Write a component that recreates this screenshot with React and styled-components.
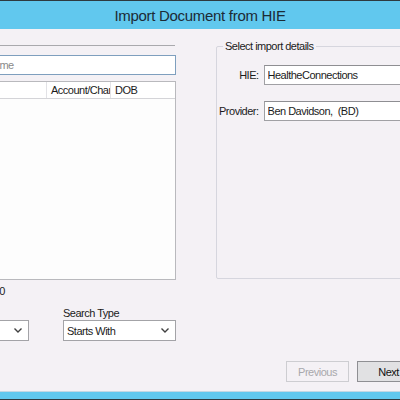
import styled, { createGlobalStyle } from 'styled-components'

const GlobalStyle = createGlobalStyle`
  html, body {
    margin: 0;
    padding: 0;
    background: #f4f1f5;
  }
  #root {
    height: 100vh;
  }
`

const font = `"Liberation Sans", Arial, sans-serif`

const Chevron = () => (
  <svg width="8" height="5" viewBox="0 0 8 5">
    <path d="M0.5 0.5 L4 4 L7.5 0.5" fill="none" stroke="#404040" strokeWidth="1.4" />
  </svg>
)

const App = () => {
  return (
    <Window>
      <GlobalStyle />
      <TitleBar>Import Document from HIE</TitleBar>
      <Body>
        <Columns>
          <LeftPane>
            <Divider />
            <SearchInput placeholder="Last Name" readOnly />
            <ListView>
              <ListHeader>
                <HeaderCell $width={85}>Patient</HeaderCell>
                <HeaderCell $width={64}>Account/Chart</HeaderCell>
                <HeaderCell $width={66}>DOB</HeaderCell>
              </ListHeader>
            </ListView>
            <CountText>Results: 0</CountText>
            <FilterRow>
              <Field $width={68}>
                <FieldLabel>Field</FieldLabel>
                <ComboBox>
                  <span>Name</span>
                  <Chevron />
                </ComboBox>
              </Field>
              <Field $width={113}>
                <FieldLabel>Search Type</FieldLabel>
                <ComboBox>
                  <span>Starts With</span>
                  <Chevron />
                </ComboBox>
              </Field>
            </FilterRow>
          </LeftPane>
          <RightPane>
            <GroupBox>
              <Legend>Select import details</Legend>
              <FormRow>
                <RowLabel>HIE:</RowLabel>
                <TextBox value="HealtheConnections" readOnly />
              </FormRow>
              <FormRow>
                <RowLabel>Provider:</RowLabel>
                <TextBox value="Ben Davidson,  (BD)" readOnly />
              </FormRow>
            </GroupBox>
          </RightPane>
        </Columns>
        <ButtonBar>
          <Button disabled>Previous</Button>
          <Button $primary>Next</Button>
        </ButtonBar>
      </Body>
      <BottomBar />
    </Window>
  )
}

const Window = styled.div`
  width: 400px;
  height: 400px;
  overflow: hidden;
  display: flex;
  flex-direction: column;
  font-family: ${font};
  font-size: 11px;
  letter-spacing: -0.5px;
  color: #1b1b1b;
`

const TitleBar = styled.div`
  height: 28px;
  border-top: 1px solid #2e3a40;
  background: #61c8ee;
  display: flex;
  align-items: center;
  justify-content: center;
  font-size: 15px;
  letter-spacing: -0.3px;
  color: #1c2b36;
  flex-shrink: 0;
`

const Body = styled.div`
  flex: 1;
  display: flex;
  flex-direction: column;
  justify-content: space-between;
`

const Columns = styled.div`
  display: flex;
  gap: 40px;
  margin-left: -39px;
  padding-top: 16px;
`

const LeftPane = styled.div`
  width: 215px;
  display: flex;
  flex-direction: column;
  flex-shrink: 0;
`

const Divider = styled.div`
  height: 1px;
  background: #a9a9ad;
  margin-right: 1px;
`

const SearchInput = styled.input`
  margin-top: 9px;
  height: 20px;
  box-sizing: border-box;
  border: 1px solid #7e9fbe;
  background: #ffffff;
  padding: 0 3px;
  font: inherit;
  letter-spacing: -0.5px;
  outline: none;
  &::placeholder {
    color: #8a8a8a;
  }
`

const ListView = styled.div`
  margin-top: 6px;
  height: 199px;
  box-sizing: border-box;
  border: 1px solid #b9b9bd;
  background: #fdfdfd;
`

const ListHeader = styled.div`
  display: flex;
  height: 16px;
  border-bottom: 1px solid #d4d4d8;
  background: #ffffff;
  overflow: hidden;
`

const HeaderCell = styled.div`
  width: ${(p) => p.$width}px;
  flex-shrink: 0;
  box-sizing: border-box;
  padding-left: 4px;
  border-right: 1px solid #e2e2e6;
  line-height: 16px;
  white-space: nowrap;
  overflow: hidden;
`

const CountText = styled.div`
  margin-top: 5px;
  line-height: 13px;
`

const FilterRow = styled.div`
  display: flex;
  gap: 34px;
  margin-top: 9px;
`

const Field = styled.div`
  width: ${(p) => p.$width}px;
  display: flex;
  flex-direction: column;
  gap: 0;
`

const FieldLabel = styled.div`
  line-height: 13px;
`

const ComboBox = styled.div`
  height: 21px;
  box-sizing: border-box;
  border: 1px solid #a3a3a7;
  background: #ffffff;
  display: flex;
  align-items: center;
  justify-content: space-between;
  padding: 0 6px 0 3px;
`

const RightPane = styled.div`
  flex: 1;
  min-width: 230px;
  padding-top: 1px;
`

const GroupBox = styled.div`
  position: relative;
  height: 233px;
  box-sizing: border-box;
  border: 1px solid #d6d6de;
  border-radius: 2px;
  padding-top: 18px;
  display: flex;
  flex-direction: column;
  gap: 16px;
`

const Legend = styled.div`
  position: absolute;
  top: -7px;
  left: 6px;
  padding: 0 2px;
  background: #f4f1f5;
  line-height: 13px;
`

const FormRow = styled.div`
  display: flex;
  align-items: center;
  gap: 5px;
`

const RowLabel = styled.div`
  width: 46px;
  text-align: right;
`

const TextBox = styled.input`
  width: 200px;
  height: 20px;
  box-sizing: border-box;
  border: 1px solid #a0a0a4;
  border-top-color: #8e8e92;
  background: #ffffff;
  padding: 0 3px;
  font: inherit;
  letter-spacing: -0.5px;
  color: #1b1b1b;
  outline: none;
`

const ButtonBar = styled.div`
  display: flex;
  gap: 8px;
  padding-left: 286px;
  margin-bottom: 9px;
`

const Button = styled.button`
  width: 63px;
  height: 21px;
  flex-shrink: 0;
  font: inherit;
  letter-spacing: -0.5px;
  padding: 0;
  border: 1px solid ${(p) => (p.$primary ? '#8f8f93' : '#cdcdd1')};
  background: ${(p) => (p.$primary ? '#e1e1e3' : '#f4f1f5')};
  color: ${(p) => (p.$primary ? '#111111' : '#a8a8ac')};
`

const BottomBar = styled.div`
  height: 7px;
  flex-shrink: 0;
  border-top: 1px solid #c4d7e3;
  background: #61c8ee;
  border-bottom: 1px solid #2e3a40;
`

export default App
